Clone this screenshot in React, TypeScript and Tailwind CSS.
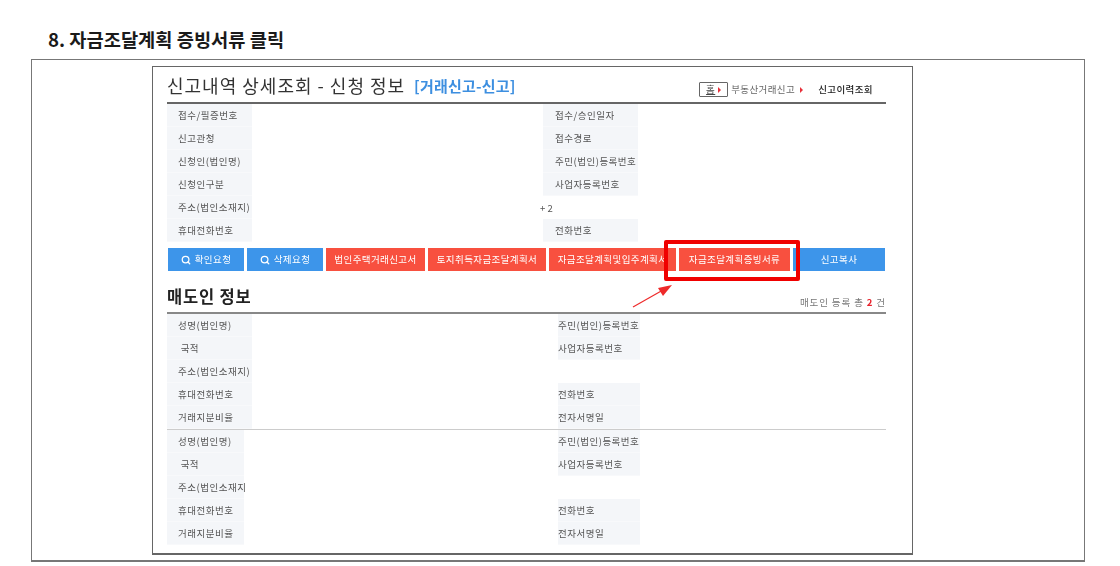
import { Search } from "lucide-react";

const fontStack = { fontFamily: '"Noto Sans CJK KR", "Liberation Sans", sans-serif' };

const applyRows: [string, string][] = [
  ["접수/필증번호", "접수/승인일자"],
  ["신고관청", "접수경로"],
  ["신청인(법인명)", "주민(법인)등록번호"],
  ["신청인구분", "사업자등록번호"],
  ["주소(법인소재지)", ""],
  ["휴대전화번호", "전화번호"],
];

const sellerRows: [string, string][] = [
  ["성명(법인명)", "주민(법인)등록번호"],
  ["\u00a0국적", "사업자등록번호"],
  ["주소(법인소재지)", ""],
  ["휴대전화번호", "전화번호"],
  ["거래지분비율", "전자서명일"],
];

const sellerRows2: [string, string][] = [
  ["성명(법인명)", "주민(법인)등록번호"],
  ["\u00a0국적", "사업자등록번호"],
  ["주소(법인소재지", ""],
  ["휴대전화번호", "전화번호"],
  ["거래지분비율", "전자서명일"],
];

const buttons = [
  { label: "확인요청", width: "w-[76px]", color: "bg-[#3d95ea]", icon: true },
  { label: "삭제요청", width: "w-[76px]", color: "bg-[#3d95ea]", icon: true },
  { label: "법인주택거래신고서", width: "w-[99px]", color: "bg-[#f8503f]", icon: false },
  { label: "토지취득자금조달계획서", width: "w-[118px]", color: "bg-[#f8503f]", icon: false },
  { label: "자금조달계획및입주계획서", width: "w-[127px]", color: "bg-[#f8503f]", icon: false },
  { label: "자금조달계획증빙서류", width: "w-[111px]", color: "bg-[#f8503f]", icon: false },
  { label: "신고복사", width: "w-[92px]", color: "bg-[#3d95ea]", icon: false },
];

function InfoTable({
  rows,
  leftCol,
  labelWidth,
  rightWidth,
}: {
  rows: [string, string][];
  leftCol: string;
  labelWidth: string;
  rightWidth: string;
}) {
  return (
    <div>
      {rows.map(([left, right]) => (
        <div key={left} className="flex h-[23px] text-[9.5px] tracking-[0.5px] text-[#555]">
          <div className={leftCol}>
            <div className={`flex h-full items-center whitespace-nowrap border-b border-[#f8f9fb] bg-[#f4f6f9] pl-[11px] ${labelWidth}`}>
              {left}
            </div>
          </div>
          {right && (
            <div className={`flex items-center whitespace-nowrap border-b border-[#f8f9fb] bg-[#f4f6f9] ${rightWidth}`}>
              {right}
            </div>
          )}
        </div>
      ))}
    </div>
  );
}

export default function App() {
  return (
    <div className="h-[566px] w-[1120px] overflow-hidden bg-white" style={fontStack}>
      <h1 className="h-[59px] pl-[48px] pt-[25px] text-[18.7px] leading-[28px] font-bold text-[#1a1a1a]">
        8. 자금조달계획 증빙서류 클릭
      </h1>

      <div className="ml-[31px] h-[503px] w-[1054px] border border-[#777] border-b-2 pt-[6px] pl-[120px]">
        <div className="relative h-[489px] w-[761px] border border-[#666] border-b-2 pl-[14px] pr-[26px] blur-[0.4px]">
          <div className="flex h-[37px] items-end border-b-2 border-[#666] pb-[4px]">
            <span className="text-[18px] leading-[26px] tracking-[1px] text-[#333]">신고내역 상세조회 - 신청 정보</span>
            <span className="ml-[9px] text-[15px] leading-[25px] font-bold tracking-[0.2px] text-[#3d8fe0]">[거래신고-신고]</span>
            <div className="mb-[1px] ml-auto flex items-center text-[9.5px] tracking-[0.4px] text-[#666]">
              <span className="-ml-[1px] flex h-[15px] w-[29px] items-center justify-center gap-[3px] rounded-[1px] border border-[#666] text-[#444]">
                <span className="underline">홈</span>
                <span className="h-0 w-0 border-y-[3px] border-l-[3px] border-y-transparent border-l-[#e8303a]" />
              </span>
              <span className="ml-[3px]">부동산거래신고</span>
              <span className="ml-[5px] h-0 w-0 border-y-[3px] border-l-[3px] border-y-transparent border-l-[#e8303a]" />
              <span className="ml-[15px] mr-[13px] font-medium text-[#222]">신고이력조회</span>
            </div>
          </div>

          <div className="relative">
            <InfoTable rows={applyRows} leftCol="w-[376px]" labelWidth="w-[85px]" rightWidth="w-[95px] pl-[12px]" />
            <span className="absolute top-[97px] left-[373px] text-[9.5px] text-[#555]">+ 2</span>
          </div>

          <div className="mt-[6px] ml-[1px] flex gap-[3px]">
            {buttons.map((b) => (
              <div
                key={b.label}
                className={`flex h-[23px] shrink-0 items-center justify-center gap-[4px] overflow-hidden whitespace-nowrap text-[9.5px] tracking-[0.4px] text-white ${b.width} ${b.color}`}
              >
                {b.icon && <Search size={10} strokeWidth={3} />}
                {b.label}
              </div>
            ))}
          </div>

          <div className="mt-[9px] flex h-[32px] items-center justify-between">
            <span className="text-[16.5px] font-bold tracking-[0.8px] text-[#222]">매도인 정보</span>
            <span className="mt-[12px] text-[9.5px] tracking-[0.9px] text-[#777]">
              매도인 등록 총 <b className="text-[#e8202a]">2</b> 건
            </span>
          </div>

          <div className="border-t-2 border-[#888]">
            <InfoTable rows={sellerRows} leftCol="w-[391px]" labelWidth="w-[85px]" rightWidth="w-[82px]" />
          </div>
          <div className="border-t border-[#ccc]">
            <InfoTable rows={sellerRows2} leftCol="w-[391px]" labelWidth="w-[77px]" rightWidth="w-[82px]" />
          </div>

          <div className="absolute top-[173px] left-[511px] h-[41px] w-[136px] rounded-[2px] border-[4px] border-[#f00000]" />
          <svg className="absolute top-[214px] left-[476px]" width="50" height="30" viewBox="0 0 50 30">
            <line x1="4" y1="26" x2="34" y2="9" stroke="#ee2a2a" strokeWidth="1.2" />
            <polygon points="43,4 29,7 34,15" fill="#ee2a2a" />
          </svg>
        </div>
      </div>
    </div>
  );
}
